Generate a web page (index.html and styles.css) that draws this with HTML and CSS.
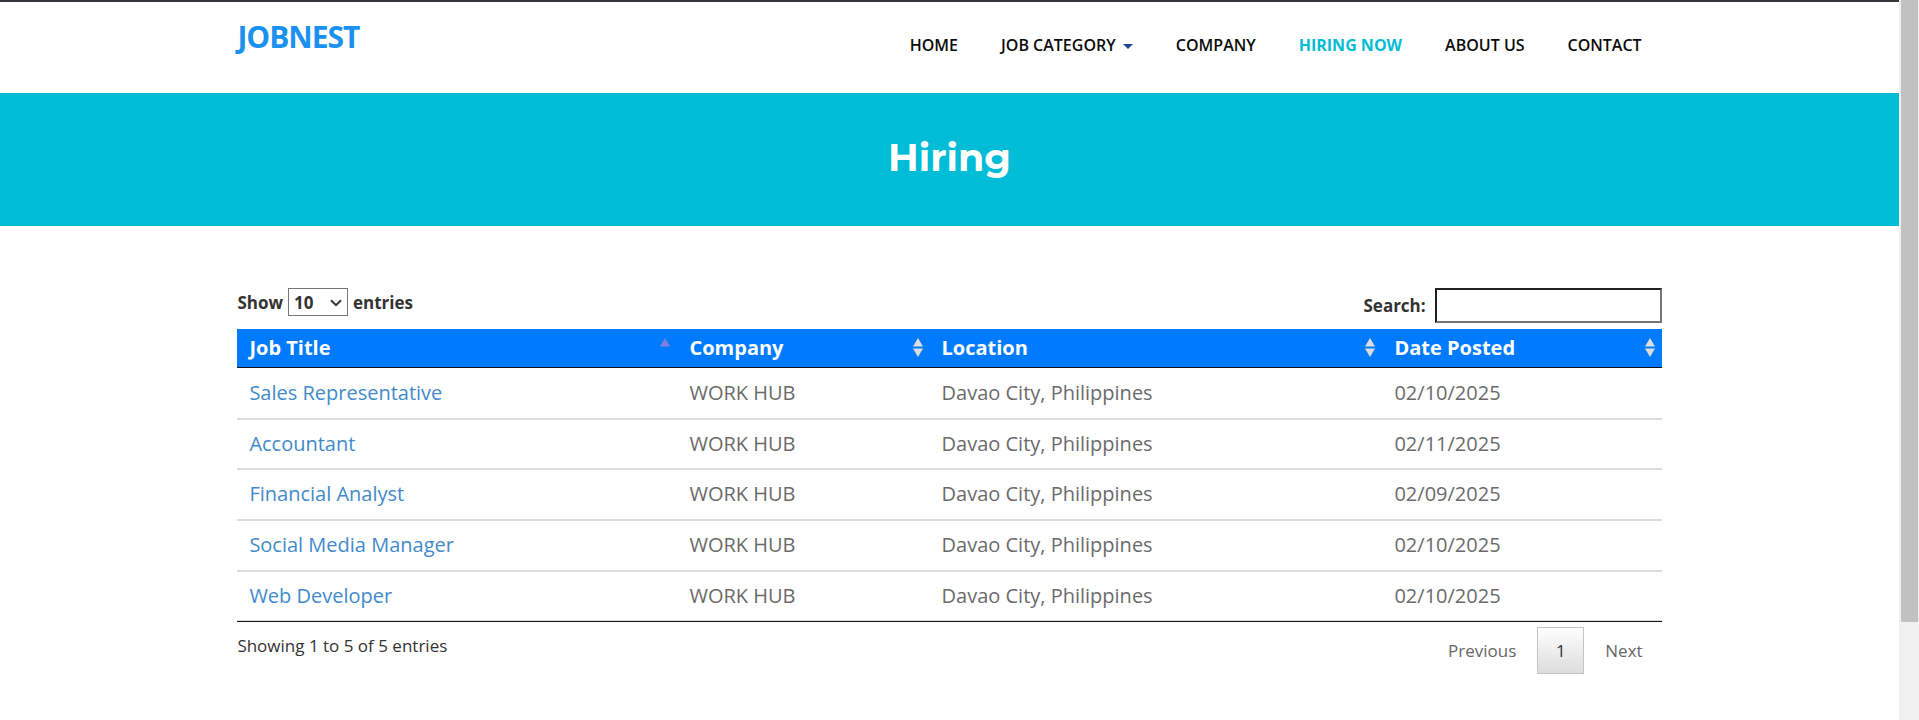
FILE: index.html
```html
<!DOCTYPE html>
<html lang="en">
<head>
<meta charset="utf-8">
<title>JOBNEST - Hiring</title>
<link rel="stylesheet" href="styles.css">
</head>
<body>
<div class="page">
  <header class="site-header">
    <div class="container header-row">
      <a class="logo" href="#">JOBNEST</a>
      <nav class="main-nav">
        <a href="#">HOME</a>
        <a href="#">JOB CATEGORY <span class="caret"></span></a>
        <a href="#">COMPANY</a>
        <a class="active" href="#">HIRING NOW</a>
        <a href="#">ABOUT US</a>
        <a href="#">CONTACT</a>
      </nav>
    </div>
  </header>
  <section class="banner"><h1>Hiring</h1></section>
  <main class="container content">
    <div class="controls">
      <label class="length">Show
        <span class="select-wrap">
          <select><option>10</option><option>25</option><option>50</option><option>100</option></select>
          <svg class="chevron" width="12" height="8" viewBox="0 0 12 8"><path d="M1 1.2 6 6.2 11 1.2" fill="none" stroke="#333" stroke-width="2"/></svg>
        </span>
        entries</label>
      <label class="search">Search: <input type="search"></label>
    </div>
    <table class="jobs">
      <colgroup><col class="c-title"><col class="c-company"><col class="c-location"><col class="c-date"></colgroup>
      <thead>
        <tr>
          <th><button type="button">Job Title <svg width="10" height="20" viewBox="0 0 10 20"><path d="M5 0 10 8.5H0z" fill="#8080dc"/></svg></button></th>
          <th><button type="button">Company <svg width="10" height="20" viewBox="0 0 10 20"><path d="M5 0 10 8.5H0zM0 10.5H10L5 19z" fill="#dcdcdc"/></svg></button></th>
          <th><button type="button">Location <svg width="10" height="20" viewBox="0 0 10 20"><path d="M5 0 10 8.5H0zM0 10.5H10L5 19z" fill="#dcdcdc"/></svg></button></th>
          <th><button type="button">Date Posted <svg width="10" height="20" viewBox="0 0 10 20"><path d="M5 0 10 8.5H0zM0 10.5H10L5 19z" fill="#dcdcdc"/></svg></button></th>
        </tr>
      </thead>
      <tbody>
        <tr><td><a href="#">Sales Representative</a></td><td>WORK HUB</td><td>Davao City, Philippines</td><td>02/10/2025</td></tr>
        <tr><td><a href="#">Accountant</a></td><td>WORK HUB</td><td>Davao City, Philippines</td><td>02/11/2025</td></tr>
        <tr><td><a href="#">Financial Analyst</a></td><td>WORK HUB</td><td>Davao City, Philippines</td><td>02/09/2025</td></tr>
        <tr><td><a href="#">Social Media Manager</a></td><td>WORK HUB</td><td>Davao City, Philippines</td><td>02/10/2025</td></tr>
        <tr><td><a href="#">Web Developer</a></td><td>WORK HUB</td><td>Davao City, Philippines</td><td>02/10/2025</td></tr>
      </tbody>
    </table>
    <div class="table-footer">
      <p class="info">Showing 1 to 5 of 5 entries</p>
      <div class="pager">
        <button type="button">Previous</button>
        <button type="button" class="current">1</button>
        <button type="button">Next</button>
      </div>
    </div>
  </main>
</div>
<div class="scroll-track"><div class="scroll-thumb"></div></div>
</body>
</html>
```
FILE: styles.css
```css
* { box-sizing: border-box; }
body {
  margin: 0;
  min-height: 100vh;
  display: flex;
  background: #fff;
  color: #333;
  font-family: "Open Sans", "Noto Sans", sans-serif;
  font-size: 17px;
}
a { text-decoration: none; color: #428bca; }
button, select, input { font: inherit; color: inherit; }
.page { flex: 1; min-width: 0; }
.container { width: 75%; margin: 0 auto; }
.scroll-track { width: 20px; padding: 0 1px 0 2px; background: #f0f0f0; }
.scroll-thumb { height: 622px; background: #c1c1c1; }

.site-header { border-top: 2px solid #38353d; }
.header-row { display: flex; justify-content: space-between; height: 91px; }
.logo {
  margin-top: 17px;
  font-size: 30px;
  line-height: 36px;
  font-weight: 700;
  letter-spacing: -1px;
  color: #1a91ee;
}
.main-nav { display: flex; gap: 43px; padding: 31px 20px 0 0; }
.main-nav a { font-size: 16px; line-height: 24px; font-weight: 600; color: #0b0b0b; white-space: nowrap; }
.main-nav .active { color: #00bcd4; font-weight: 700; }
.caret {
  display: inline-block;
  margin-left: 3px;
  vertical-align: middle;
  border: 5px solid transparent;
  border-top-color: #24409a;
  border-bottom: 0;
}

.banner { background: #00bcd7; padding: 41px 0 44px; text-align: center; }
.banner h1 {
  margin: 0;
  font-family: Montserrat, Inter, sans-serif;
  font-size: 38px;
  line-height: 48px;
  font-weight: 700;
  color: #fff;
}

.content { padding-top: 62px; }
.controls { display: flex; justify-content: space-between; align-items: flex-start; font-weight: 700; margin-bottom: 6px; }
.length { display: flex; align-items: center; gap: 5px; }
.select-wrap { position: relative; }
.length select {
  display: block;
  appearance: none;
  width: 60px;
  height: 28px;
  padding: 0 0 0 5px;
  border: 1px solid #767676;
  border-radius: 0;
  background: #fff;
}
.chevron { position: absolute; right: 6px; top: 11px; pointer-events: none; }
.search { display: flex; align-items: center; gap: 9px; }
.search input { width: 227px; height: 35px; border: 2px inset #767676; background: #fff; border-radius: 0; appearance: none; }

.jobs { width: 100%; table-layout: fixed; border-collapse: separate; border-spacing: 0; border-bottom: 1px solid #111; font-size: 20px; }
.c-title { width: 30.9%; }
.c-company { width: 17.7%; }
.c-location { width: 31.8%; }
.c-date { width: 19.6%; }
.jobs th { padding: 0; background: #007bff; border-bottom: 1px solid #111; color: #fff; }
.jobs th button {
  display: flex;
  justify-content: space-between;
  align-items: center;
  width: 100%;
  height: 38px;
  padding: 0 7px 1px 12px;
  border: 0;
  background: none;
  font-weight: 700;
}
.jobs td { padding: 10px 12px 11px; line-height: 28px; color: #6b6b6b; border-bottom: 2px solid #ddd; }
.jobs tr:first-child td { padding: 11px 12px; }
.jobs tr:nth-child(2) td { padding-bottom: 10px; }
.jobs tr:last-child td { padding-bottom: 10px; border-bottom-width: 1px; }

.table-footer { display: flex; justify-content: space-between; align-items: flex-start; }
.info { margin: 11px 0 0; line-height: 26px; }
.pager { display: flex; gap: 2px; padding-top: 5px; }
.pager button { min-width: 47px; height: 47px; padding: 0 18px; border: 1px solid transparent; background: none; color: #666; }
.pager .current { padding: 0; border-color: #c4c4c4; background: linear-gradient(#fff, #dcdcdc); color: #333; }
```
